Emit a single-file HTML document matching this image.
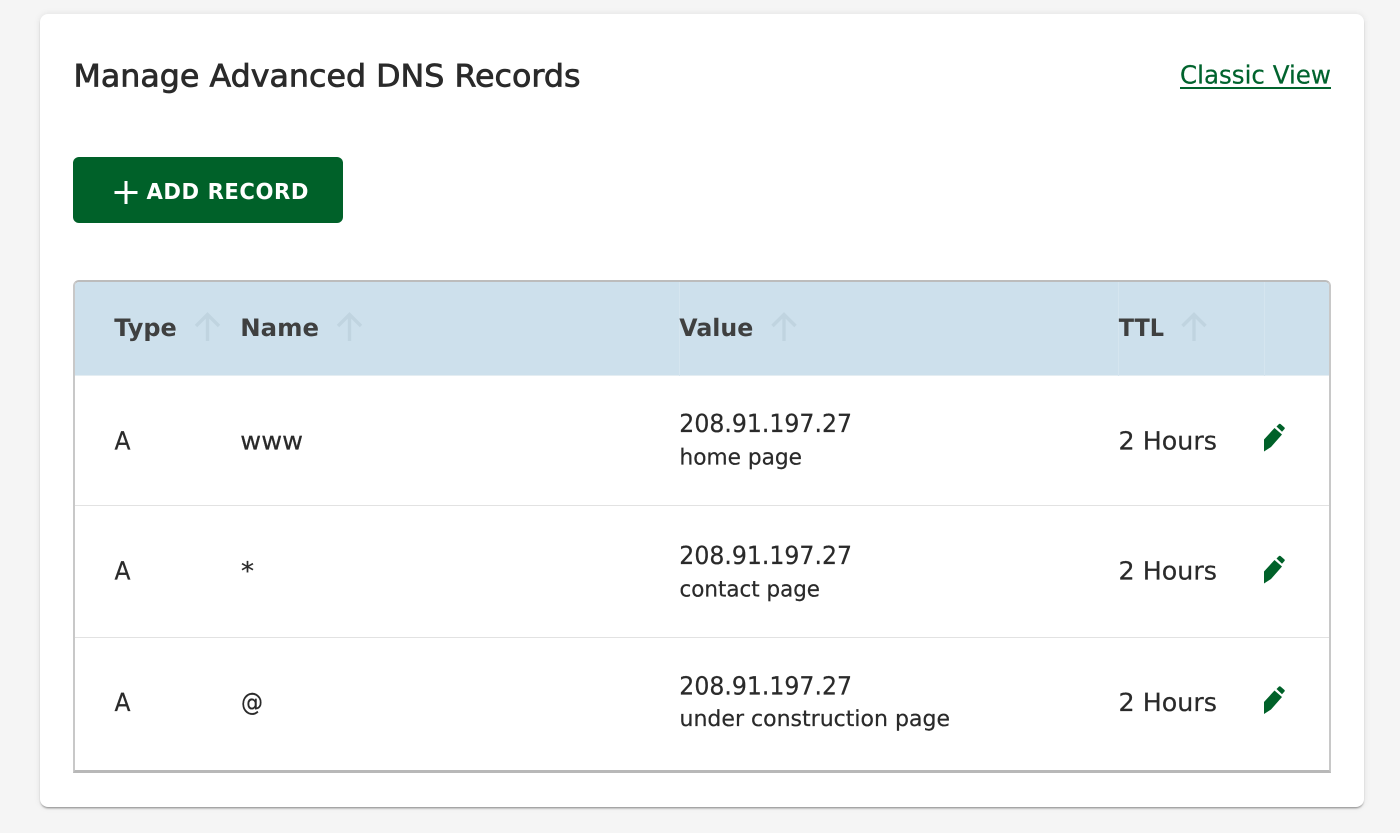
<!DOCTYPE html>
<html lang="en"><head><meta charset="utf-8"><title>Manage Advanced DNS Records</title>
<style>
html,body{margin:0;padding:0;width:1400px;height:833px;overflow:hidden;background:#f5f5f5}
.abs{position:absolute;box-sizing:border-box}
#card{left:40px;top:14px;width:1324px;height:793px;background:#fff;border-radius:8px;box-shadow:0 2px 2px -1px rgba(0,0,0,.45),0 0 7px rgba(0,0,0,.09)}
#btn{left:73px;top:157px;width:270px;height:66px;background:#006129;border-radius:6px}
#table{left:73px;top:280px;width:1258px;height:493px;background:#fff;border:2px solid #c8c8c8;border-top-color:#bcbcbc;border-bottom-color:#b8b8b8;border-bottom-width:3px;border-radius:6px 6px 0 0;overflow:hidden}
#head{left:0;top:0;width:1254px;height:94px;background:#cde0ec;border-bottom:1px solid #e4edf2}
.v{top:0;width:1px;height:94px;background:#d5e5ef}
.line{left:0;width:1254px;height:1px;background:#e2e2e2}
svg{position:absolute;left:0;top:0}
text{font-family:"DejaVu Sans","Liberation Sans",sans-serif;fill:#2a2a2a;text-rendering:geometricPrecision;stroke:#2a2a2a;stroke-width:.22px}
.hd{font-weight:700;font-size:24px;fill:#3f4040;stroke:none}
.b{font-size:25px}
.s{font-size:22px}
</style></head>
<body>
<div class="abs" id="card"></div>
<div class="abs" id="btn"></div>
<div class="abs" id="table">
  <div class="abs" id="head">
    <div class="abs v" style="left:604px"></div>
    <div class="abs v" style="left:1043px"></div>
    <div class="abs v" style="left:1189px"></div>
  </div>
  <div class="abs line" style="top:223px"></div>
  <div class="abs line" style="top:355px"></div>
</div>
<svg width="1400" height="833" viewBox="0 0 1400 833">
  <text x="73.500" y="86.300" font-size="31" font-weight="500" style="stroke-width:.75px" textLength="507" lengthAdjust="spacingAndGlyphs">Manage Advanced DNS Records</text>
  <text x="1180" y="83.300" font-size="25" style="fill:#00632d;stroke:#00632d" textLength="151" lengthAdjust="spacingAndGlyphs">Classic View</text>
  <rect x="1180" y="87" width="151" height="2" fill="#00632d"/>

  <path d="M126 181v23M114.500 192.500h23" stroke="#fff" stroke-width="3" fill="none"/>
  <text x="146.500" y="199" font-size="22" font-weight="700" style="fill:#fff;stroke:none;letter-spacing:.6px" textLength="162.500" lengthAdjust="spacingAndGlyphs">ADD RECORD</text>

  <text class="hd" x="114.300" y="336" textLength="62.500" lengthAdjust="spacingAndGlyphs">Type</text>
  <text class="hd" x="240.300" y="336" textLength="78.700" lengthAdjust="spacingAndGlyphs">Name</text>
  <text class="hd" x="679.300" y="336" textLength="74" lengthAdjust="spacingAndGlyphs">Value</text>
  <text class="hd" x="1118.700" y="336" textLength="45.300" lengthAdjust="spacingAndGlyphs">TTL</text>
  <g stroke="#c0d4e0" stroke-width="3.400" fill="none">
    <path d="M207.500 341v-26M196 326l11.500-11.500L219 326"/>
    <path d="M349.500 341v-26M338 326l11.500-11.500L361 326"/>
    <path d="M784 341v-26M772.500 326L784 314.500 795.500 326"/>
    <path d="M1194 341v-26M1182.500 326l11.500-11.500 11.500 11.500"/>
  </g>

  <text class="b" x="114.500" y="449.300" textLength="16" lengthAdjust="spacingAndGlyphs">A</text>
  <text class="b" x="240.300" y="449.300" textLength="62.700" lengthAdjust="spacingAndGlyphs">www</text>
  <text class="b" x="679.300" y="431.800" textLength="172.700" lengthAdjust="spacingAndGlyphs">208.91.197.27</text>
  <text class="s" x="679.500" y="464.500" textLength="122.500" lengthAdjust="spacingAndGlyphs">home page</text>
  <text class="b" x="1118.500" y="449.500" textLength="98.500" lengthAdjust="spacingAndGlyphs">2 Hours</text>

  <text class="b" x="114.500" y="579.500" textLength="16" lengthAdjust="spacingAndGlyphs">A</text>
  <text class="b" x="241" y="579.500" textLength="13" lengthAdjust="spacingAndGlyphs">*</text>
  <text class="b" x="679.300" y="563.800" textLength="172.700" lengthAdjust="spacingAndGlyphs">208.91.197.27</text>
  <text class="s" x="679.500" y="596.300" textLength="140.500" lengthAdjust="spacingAndGlyphs">contact page</text>
  <text class="b" x="1118.500" y="579.500" textLength="98.500" lengthAdjust="spacingAndGlyphs">2 Hours</text>

  <text class="b" x="114.500" y="711" textLength="16" lengthAdjust="spacingAndGlyphs">A</text>
  <text class="b" x="241" y="710.500" textLength="22" lengthAdjust="spacingAndGlyphs">@</text>
  <text class="b" x="679.300" y="694.300" textLength="172.700" lengthAdjust="spacingAndGlyphs">208.91.197.27</text>
  <text class="s" x="679.500" y="726" textLength="270.500" lengthAdjust="spacingAndGlyphs">under construction page</text>
  <text class="b" x="1118.500" y="711" textLength="98.500" lengthAdjust="spacingAndGlyphs">2 Hours</text>

  <g fill="#006129">
    <path d="M1264 451.500v-12l10.500-11.500 7.500 6.500-11 12.500zM1276.500 426.500l2.500-2.500q.7-.6 1.500 0l4 3.500q.6.7 0 1.500l-2.500 2.700z"/>
    <path transform="translate(0 132)" d="M1264 451.500v-12l10.500-11.500 7.500 6.500-11 12.500zM1276.500 426.500l2.500-2.500q.7-.6 1.500 0l4 3.500q.6.7 0 1.500l-2.500 2.700z"/>
    <path transform="translate(0 262.500)" d="M1264 451.500v-12l10.500-11.500 7.500 6.500-11 12.500zM1276.500 426.500l2.500-2.500q.7-.6 1.500 0l4 3.500q.6.7 0 1.500l-2.500 2.700z"/>
  </g>
</svg>
</body></html>
